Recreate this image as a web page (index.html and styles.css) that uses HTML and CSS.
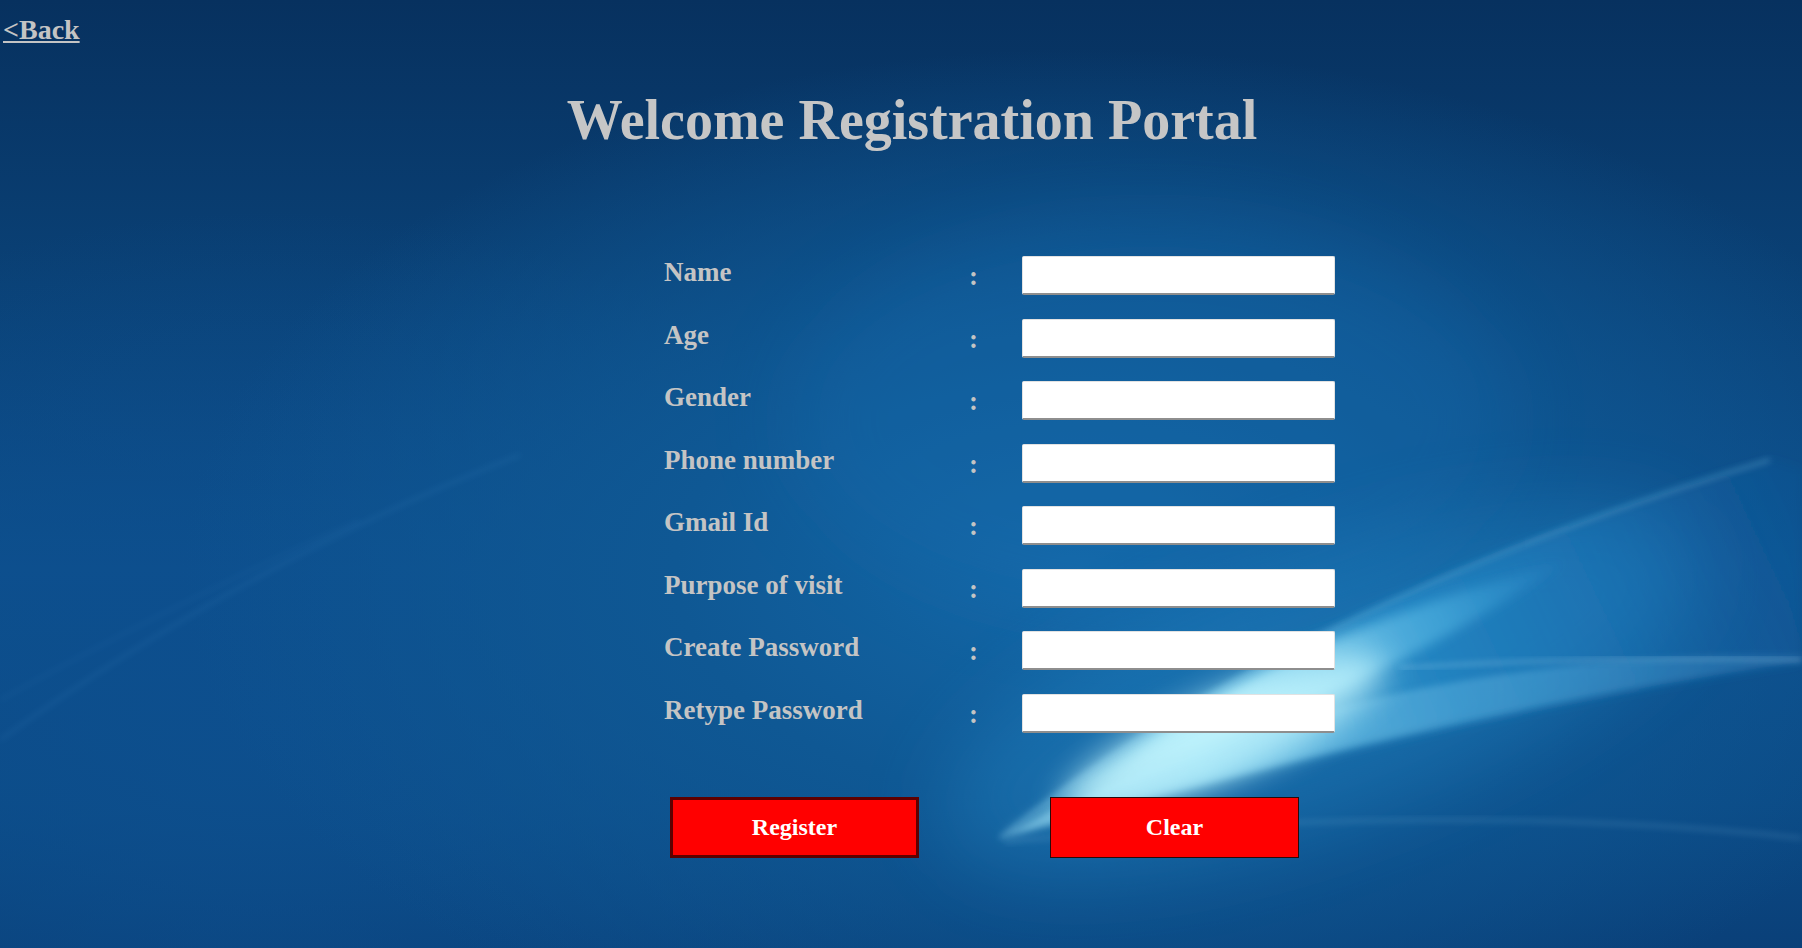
FILE: index.html
```html
<!DOCTYPE html>
<html lang="en">
<head>
<meta charset="utf-8">
<title>Welcome Registration Portal</title>
<link rel="stylesheet" href="styles.css">
</head>
<body>
<svg class="bg-art" viewBox="0 0 1802 948" preserveAspectRatio="none" aria-hidden="true">
  <defs>
    <filter id="b3" x="-20%" y="-20%" width="140%" height="140%"><feGaussianBlur stdDeviation="3"/></filter>
    <filter id="b6" x="-30%" y="-30%" width="160%" height="160%"><feGaussianBlur stdDeviation="6"/></filter>
    <filter id="b16" x="-40%" y="-40%" width="180%" height="180%"><feGaussianBlur stdDeviation="16"/></filter>
    <filter id="b40" x="-60%" y="-60%" width="220%" height="220%"><feGaussianBlur stdDeviation="40"/></filter>
    <linearGradient id="wedge" x1="1000" y1="840" x2="1780" y2="470" gradientUnits="userSpaceOnUse">
      <stop offset="0" stop-color="#aeeefc" stop-opacity="0.3"/>
      <stop offset="0.25" stop-color="#7ad8f4" stop-opacity="0.7"/>
      <stop offset="0.55" stop-color="#2e9fdc" stop-opacity="0.45"/>
      <stop offset="1" stop-color="#1d6fbd" stop-opacity="0.1"/>
    </linearGradient>
    <linearGradient id="ridge" x1="1090" y1="790" x2="1565" y2="562" gradientUnits="userSpaceOnUse">
      <stop offset="0" stop-color="#d6fbff" stop-opacity="0.2"/>
      <stop offset="0.3" stop-color="#c4f6ff" stop-opacity="0.7"/>
      <stop offset="0.75" stop-color="#5fc4ee" stop-opacity="0.45"/>
      <stop offset="1" stop-color="#3aa2e0" stop-opacity="0.1"/>
    </linearGradient>
    <linearGradient id="tail" x1="1000" y1="0" x2="1802" y2="0" gradientUnits="userSpaceOnUse">
      <stop offset="0" stop-color="#9fe2f8" stop-opacity="0.5"/>
      <stop offset="0.6" stop-color="#7ccbef" stop-opacity="0.3"/>
      <stop offset="1" stop-color="#6ab8e8" stop-opacity="0.15"/>
    </linearGradient>
  </defs>
  <ellipse cx="1150" cy="420" rx="360" ry="200" fill="#176caf" opacity="0.3" filter="url(#b40)"/>
  <ellipse cx="1320" cy="690" rx="400" ry="130" transform="rotate(-20 1320 690)" fill="#2a96d6" opacity="0.3" filter="url(#b40)"/>
  <path d="M1000,838 Q1300,600 1770,460 L1802,470 L1802,662 Q1450,712 1000,838 Z" fill="url(#wedge)" filter="url(#b6)"/>
  <path d="M1000,838 Q1350,650 1802,655 L1802,662 Q1450,712 1000,838 Z" fill="url(#tail)" filter="url(#b3)"/>
  <path d="M1090,792 Q1260,640 1565,562 Q1380,690 1090,792 Z" fill="url(#ridge)" filter="url(#b6)"/>
  <ellipse cx="1225" cy="735" rx="175" ry="42" transform="rotate(-24 1225 735)" fill="#c6f8ff" opacity="0.75" filter="url(#b16)"/>
  <path d="M1000,838 Q1300,600 1770,460" stroke="#9edff8" stroke-width="2" fill="none" opacity="0.5" filter="url(#b3)"/>
  <path d="M1400,668 Q1600,655 1802,660" stroke="#cdf2ff" stroke-width="2" fill="none" opacity="0.45" filter="url(#b3)"/>
  <path d="M1005,842 Q1450,800 1802,838" stroke="#a8dcf5" stroke-width="3" fill="none" opacity="0.2" filter="url(#b3)"/>
  <path d="M0,740 Q250,560 520,455" stroke="#5fa8e0" stroke-width="2" fill="none" opacity="0.2" filter="url(#b3)"/>
  <path d="M0,700 Q180,600 360,520" stroke="#5fa8e0" stroke-width="1.5" fill="none" opacity="0.15" filter="url(#b3)"/>
</svg>

<div class="page">
  <a class="back" href="#">&lt;Back</a>
  <h1 class="title">Welcome Registration Portal</h1>

  <form class="reg-form">
    <div class="grid">
      <label class="lbl">Name</label><span class="colon">:</span><input class="field" type="text">
      <label class="lbl">Age</label><span class="colon">:</span><input class="field" type="text">
      <label class="lbl">Gender</label><span class="colon">:</span><input class="field" type="text">
      <label class="lbl">Phone number</label><span class="colon">:</span><input class="field" type="text">
      <label class="lbl">Gmail Id</label><span class="colon">:</span><input class="field" type="text">
      <label class="lbl">Purpose of visit</label><span class="colon">:</span><input class="field" type="text">
      <label class="lbl">Create Password</label><span class="colon">:</span><input class="field" type="password">
      <label class="lbl">Retype Password</label><span class="colon">:</span><input class="field" type="password">
    </div>
    <div class="buttons">
      <button type="button" class="btn btn-register">Register</button>
      <button type="reset" class="btn btn-clear">Clear</button>
    </div>
  </form>
</div>
</body>
</html>
```

FILE: styles.css
```css
html, body {
  margin: 0;
  padding: 0;
}

body {
  width: 1802px;
  height: 948px;
  overflow: hidden;
  position: relative;
  font-family: "Liberation Serif", "Times New Roman", serif;
  font-weight: bold;
  background:
    radial-gradient(ellipse 900px 520px at 60% 60%, #1468a8 0%, #0f5894 45%, rgba(12, 74, 132, 0) 100%),
    radial-gradient(ellipse 700px 500px at 15% 75%, #0d4f8e 0%, rgba(13, 79, 142, 0) 100%),
    linear-gradient(180deg, #07315f 0%, #0a4176 30%, #0d4f8d 60%, #0b4a85 85%, #0a4079 100%);
}

.bg-art {
  position: absolute;
  left: 0;
  top: 0;
  width: 1802px;
  height: 948px;
  z-index: 0;
}

.page {
  position: relative;
  z-index: 1;
  display: flex;
  flex-direction: column;
}

.back {
  align-self: flex-start;
  margin: 15px 0 0 3px;
  font-size: 28px;
  line-height: 30px;
  color: #c4c4c4;
  text-decoration: underline;
}

.title {
  margin: 42px 0 0 22px;
  font-size: 56px;
  line-height: 66px;
  text-align: center;
  color: #c6c6c6;
}

.reg-form {
  margin: 103px 0 0 664px;
  display: flex;
  flex-direction: column;
}

.grid {
  display: grid;
  grid-template-columns: 305px 53px 313px;
  grid-auto-rows: 39px;
  row-gap: 23.5px;
}

.lbl {
  font-size: 27px;
  line-height: 27px;
  padding-top: 3px;
  color: #c4c4c4;
  white-space: nowrap;
}

.colon {
  font-size: 27px;
  line-height: 27px;
  padding-top: 7px;
  color: #c4c4c4;
}

.field {
  box-sizing: border-box;
  width: 313px;
  height: 39px;
  margin: 0;
  padding: 0 6px;
  background: #ffffff;
  border: 1px solid #e2e2e2;
  border-bottom: 2px solid #8e8e8e;
  border-radius: 2px;
}

.buttons {
  display: flex;
  gap: 131px;
  margin: 64px 0 0 6px;
}

.btn {
  box-sizing: border-box;
  width: 249px;
  height: 61px;
  background: #ff0000;
  color: #ffffff;
  font-family: "Liberation Serif", "Times New Roman", serif;
  font-weight: bold;
  font-size: 24px;
  padding: 0;
  cursor: pointer;
}

.btn-register {
  border: 3px solid #5e0000;
}

.btn-clear {
  border: 1px solid #2a0a0a;
}
```
